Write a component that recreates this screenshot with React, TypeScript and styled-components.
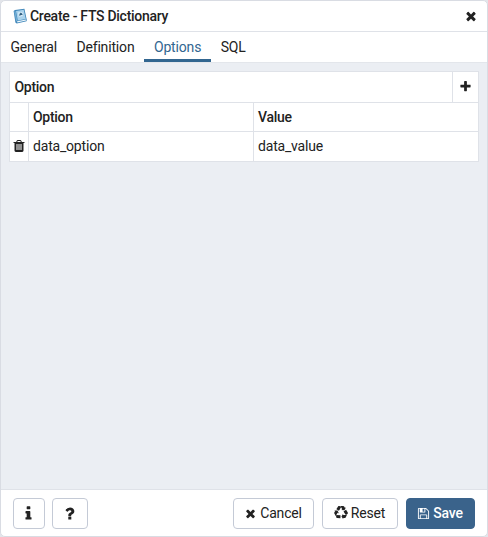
import React from 'react';
import styled, { createGlobalStyle, css } from 'styled-components';

const line = '#dfe2e8';

const GlobalStyle = createGlobalStyle`
  * { box-sizing: border-box; }
  body { margin: 0; background: #e3e5ea; }
`;

const Dialog = styled.div`
  width: 488px;
  height: 537px;
  display: flex;
  flex-direction: column;
  background: #fff;
  border: 1px solid #d9dce3;
  border-radius: 5px;
  overflow: hidden;
  color: #222;
  font: 400 14px/20px Roboto, sans-serif;
  letter-spacing: -0.19px;
`;

const Header = styled.header`
  height: 31px;
  flex: none;
  display: flex;
  align-items: center;
  padding: 0 9px 0 12px;
  border-bottom: 1px solid ${line};
`;

const Title = styled.h1`
  flex: 1;
  margin: 0 0 0 2px;
  font-size: 14px;
  font-weight: 500;
  letter-spacing: -0.28px;
`;

const IconButton = styled.button`
  display: flex;
  align-items: center;
  justify-content: center;
  padding: 0;
  border: 0;
  background: none;
  color: #222;
`;

const Tabs = styled.nav`
  height: 30px;
  flex: none;
  display: flex;
`;

const Tab = styled.button<{ $active?: boolean }>`
  padding: 3px 10px 0 9.5px;
  border: 0;
  border-bottom: 3px solid ${p => (p.$active ? '#326690' : 'transparent')};
  background: none;
  color: ${p => (p.$active ? '#326690' : '#222')};
  font: 400 14px/24px Roboto, sans-serif;
  letter-spacing: -0.17px;
`;

const Content = styled.main`
  flex: 1;
  padding: 8px 8px 0;
  background: #ebeef3;
  border-top: 1px solid #e3e6eb;
  border-bottom: 1px solid ${line};
`;

const Panel = styled.section`
  background: #fff;
  border: 1px solid ${line};
`;

const PanelHeader = styled.div`
  height: 31px;
  display: flex;
  border-bottom: 1px solid ${line};
`;

const PanelTitle = styled.div`
  flex: 1;
  padding-left: 4.5px;
  line-height: 30px;
  font-weight: 500;
  letter-spacing: -0.3px;
`;

const AddButton = styled(IconButton)`
  width: 26px;
  padding-bottom: 2px;
  border-left: 1px solid ${line};
`;

const Row = styled.div<{ $head?: boolean }>`
  display: grid;
  grid-template-columns: 19px 225px 1fr;
  height: 29px;
  ${p => p.$head && css`
    border-bottom: 1px solid ${line};
    font-weight: 500;
    letter-spacing: -0.3px;
  `}
`;

const Cell = styled.div`
  padding-left: 4px;
  line-height: 28px;
  border-right: 1px solid ${line};
  &:last-child { border-right: 0; }
`;

const IconCell = styled(Cell)`
  display: flex;
  align-items: center;
  justify-content: center;
  padding: 0 0 2px;
`;

const Footer = styled.footer`
  height: 46px;
  flex: none;
  display: flex;
  align-items: center;
  gap: 8px;
  padding: 0 12px;
`;

const HelpGroup = styled.div`
  flex: 1;
  display: flex;
  gap: 7px;
`;

const Button = styled.button<{ $width: number; $primary?: boolean }>`
  width: ${p => p.$width}px;
  height: 31px;
  display: flex;
  align-items: center;
  justify-content: center;
  gap: 3px;
  padding: 0 1px 0 0;
  border: 1px solid ${p => (p.$primary ? '#3a638b' : '#c4cad6')};
  border-radius: 4px;
  background: ${p => (p.$primary ? '#3a638b' : '#fff')};
  color: ${p => (p.$primary ? '#fff' : '#222')};
  font: ${p => (p.$primary ? 500 : 400)} 14px/20px Roboto, sans-serif;
  letter-spacing: -0.17px;
`;

const Svg = styled.svg`
  display: block;
  flex: none;
  fill: currentColor;
`;

const paths = {
  times: 'M1490 1322q0 40-28 68l-136 136q-28 28-68 28t-68-28l-294-294-294 294q-28 28-68 28t-68-28l-136-136q-28-28-28-68t28-68l294-294-294-294q-28-28-28-68t28-68l136-136q28-28 68-28t68 28l294 294 294-294q28-28 68-28t68 28l136 136q28 28 28 68t-28 68l-294 294 294 294q28 28 28 68z',
  plus: 'M1600 736v192q0 40-28 68t-68 28h-416v416q0 40-28 68t-68 28h-192q-40 0-68-28t-28-68v-416h-416q-40 0-68-28t-28-68v-192q0-40 28-68t68-28h416v-416q0-40 28-68t68-28h192q40 0 68 28t28 68v416h416q40 0 68 28t28 68z',
  info: 'M1216 1344v128q0 26-19 45t-45 19h-512q-26 0-45-19t-19-45v-128q0-26 19-45t45-19h64v-384h-64q-26 0-45-19t-19-45v-128q0-26 19-45t45-19h384q26 0 45 19t19 45v576h64q26 0 45 19t19 45zm-128-1152v192q0 26-19 45t-45 19h-256q-26 0-45-19t-19-45v-192q0-26 19-45t45-19h256q26 0 45 19t19 45z',
  question: 'M1088 1256v240q0 16-12 28t-28 12h-240q-16 0-28-12t-12-28v-240q0-16 12-28t28-12h240q16 0 28 12t12 28zm316-600q0 54-15.5 101t-35 76.5-55 59.5-57.5 43.5-61 35.5q-41 23-68.5 65t-27.5 67q0 17-12 32.5t-28 15.5h-240q-15 0-25.5-18.5t-10.5-37.5v-45q0-83 65-156.5t143-108.5q59-27 84-56t25-76q0-42-46.5-74t-107.5-32q-65 0-108 29-35 25-107 115-13 16-31 16-12 0-25-8l-164-125q-13-10-15.5-25t5.5-28q160-266 464-266 80 0 161 31t146 83 106 127.5 41 158.5z',
  recycle: 'M836 1169l-15 368-2 22-420-29q-36-3-67-31.5t-47-65.5q-11-27-14.5-55t4-65 12-55 21.5-64 19-53q78 12 509 28zm-387-586l180 379-147-92q-63 72-111.5 144.5t-72.5 125-39.5 94.5-18.5 63l-4 21-190-357q-17-26-18-56t6-47l8-18q35-63 114-188l-140-86zm1231 517l-188 359q-12 29-36.5 46.5t-43.5 20.5l-18 4q-71 7-219 12l8 164-230-367 211-362 7 173q170 16 283 5t170-33zm-785-924q-47 63-265 435l-317-187-19-12 225-356q20-31 60-45t80-10q24 2 48.5 12t42 21 41.5 33 36 34.5 36 39.5 32 35zm655 307l212 363q18 37 12.5 76t-27.5 74q-13 20-33 37t-38 28-48.5 22-47 16-51.5 14-46 12q-34-72-265-436l313-195zm-143-226l142-83-220 373-419-20 151-86q-34-89-75-166t-75.5-123.5-64.5-80-47-46.5l-17-13 405 1q31-3 58 10.5t39 28.5l11 15q39 61 112 190z',
  save: 'M512 1536h768v-384h-768v384zm896 0h128v-896q0-14-10-38.5t-20-34.5l-281-281q-10-10-34-20t-39-10v416q0 40-28 68t-68 28h-576q-40 0-68-28t-28-68v-416h-128v1280h128v-416q0-40 28-68t68-28h832q40 0 68 28t28 68v416zm-384-928v-320q0-13-9.5-22.5t-22.5-9.5h-192q-13 0-22.5 9.5t-9.5 22.5v320q0 13 9.5 22.5t22.5 9.5h192q13 0 22.5-9.5t9.5-22.5zm640 32v928q0 40-28 68t-68 28h-1344q-40 0-68-28t-28-68v-1344q0-40 28-68t68-28h928q40 0 88 20t76 48l280 280q28 28 48 76t20 88z',
  trash: 'M704 1376v-704q0-14-9-23t-23-9h-64q-14 0-23 9t-9 23v704q0 14 9 23t23 9h64q14 0 23-9t9-23zm256 0v-704q0-14-9-23t-23-9h-64q-14 0-23 9t-9 23v704q0 14 9 23t23 9h64q14 0 23-9t9-23zm256 0v-704q0-14-9-23t-23-9h-64q-14 0-23 9t-9 23v704q0 14 9 23t23 9h64q14 0 23-9t9-23zm-544-992h448l-48-117q-7-9-17-11h-317q-10 2-17 11zm928 32v64q0 14-9 23t-23 9h-96v948q0 83-47 143.5t-113 60.5h-832q-66 0-113-58.5t-47-141.5v-952h-96q-14 0-23-9t-9-23v-64q0-14 9-23t23-9h309l70-167q15-37 54-63t79-26h320q40 0 79 26t54 63l70 167h309q14 0 23 9t9 23z',
};

const Icon = ({ name, size }: { name: keyof typeof paths; size: number }) => (
  <Svg width={size} height={size} viewBox="0 0 1792 1792"><path d={paths[name]} /></Svg>
);

const DictionaryIcon = () => (
  <Svg width="15" height="16" viewBox="0 0 15 16">
    <path d="M.6 3 2 1.9 11.4.8l2.4 11.3-.3 1.2-9.8 2.3-1.3-1.2z" fill="#3f86b9" />
    <path d="m3 2.9 7.7-1.1 2.1 9.1-8 1.7z" fill="#a9d2ec" />
    <path d="m1.2 3.4 1.3-.3 2 9.7-1.4.6z" fill="#6fabd3" />
    <path d="m4 13.3 9-1.9.1 1.1-8.7 2.1z" fill="#edf7fc" />
    <path d="m5.1 4.6 4.1-.7.9 4-4.3.8z" fill="#dceffa" />
    <path d="m6.7 7.6.6-2.3.9-.1 1 1.9M7 6.8l1.7-.3" fill="none" stroke="#174a70" strokeWidth="1" />
  </Svg>
);

export default function App() {
  return (
    <>
      <GlobalStyle />
      <Dialog>
        <Header>
          <DictionaryIcon />
          <Title>Create - FTS Dictionary</Title>
          <IconButton aria-label="Close"><Icon name="times" size={14} /></IconButton>
        </Header>
        <Tabs>
          <Tab>General</Tab>
          <Tab>Definition</Tab>
          <Tab $active>Options</Tab>
          <Tab>SQL</Tab>
        </Tabs>
        <Content>
          <Panel>
            <PanelHeader>
              <PanelTitle>Option</PanelTitle>
              <AddButton aria-label="Add"><Icon name="plus" size={13} /></AddButton>
            </PanelHeader>
            <Row $head><Cell /><Cell>Option</Cell><Cell>Value</Cell></Row>
            <Row>
              <IconCell><Icon name="trash" size={14} /></IconCell>
              <Cell>data_option</Cell>
              <Cell>data_value</Cell>
            </Row>
          </Panel>
        </Content>
        <Footer>
          <HelpGroup>
            <Button $width={32} aria-label="Info"><Icon name="info" size={17} /></Button>
            <Button $width={36} aria-label="Help"><Icon name="question" size={17} /></Button>
          </HelpGroup>
          <Button $width={81}><Icon name="times" size={13} />Cancel</Button>
          <Button $width={76}><Icon name="recycle" size={14} />Reset</Button>
          <Button $width={69} $primary><Icon name="save" size={13} />Save</Button>
        </Footer>
      </Dialog>
    </>
  );
}
